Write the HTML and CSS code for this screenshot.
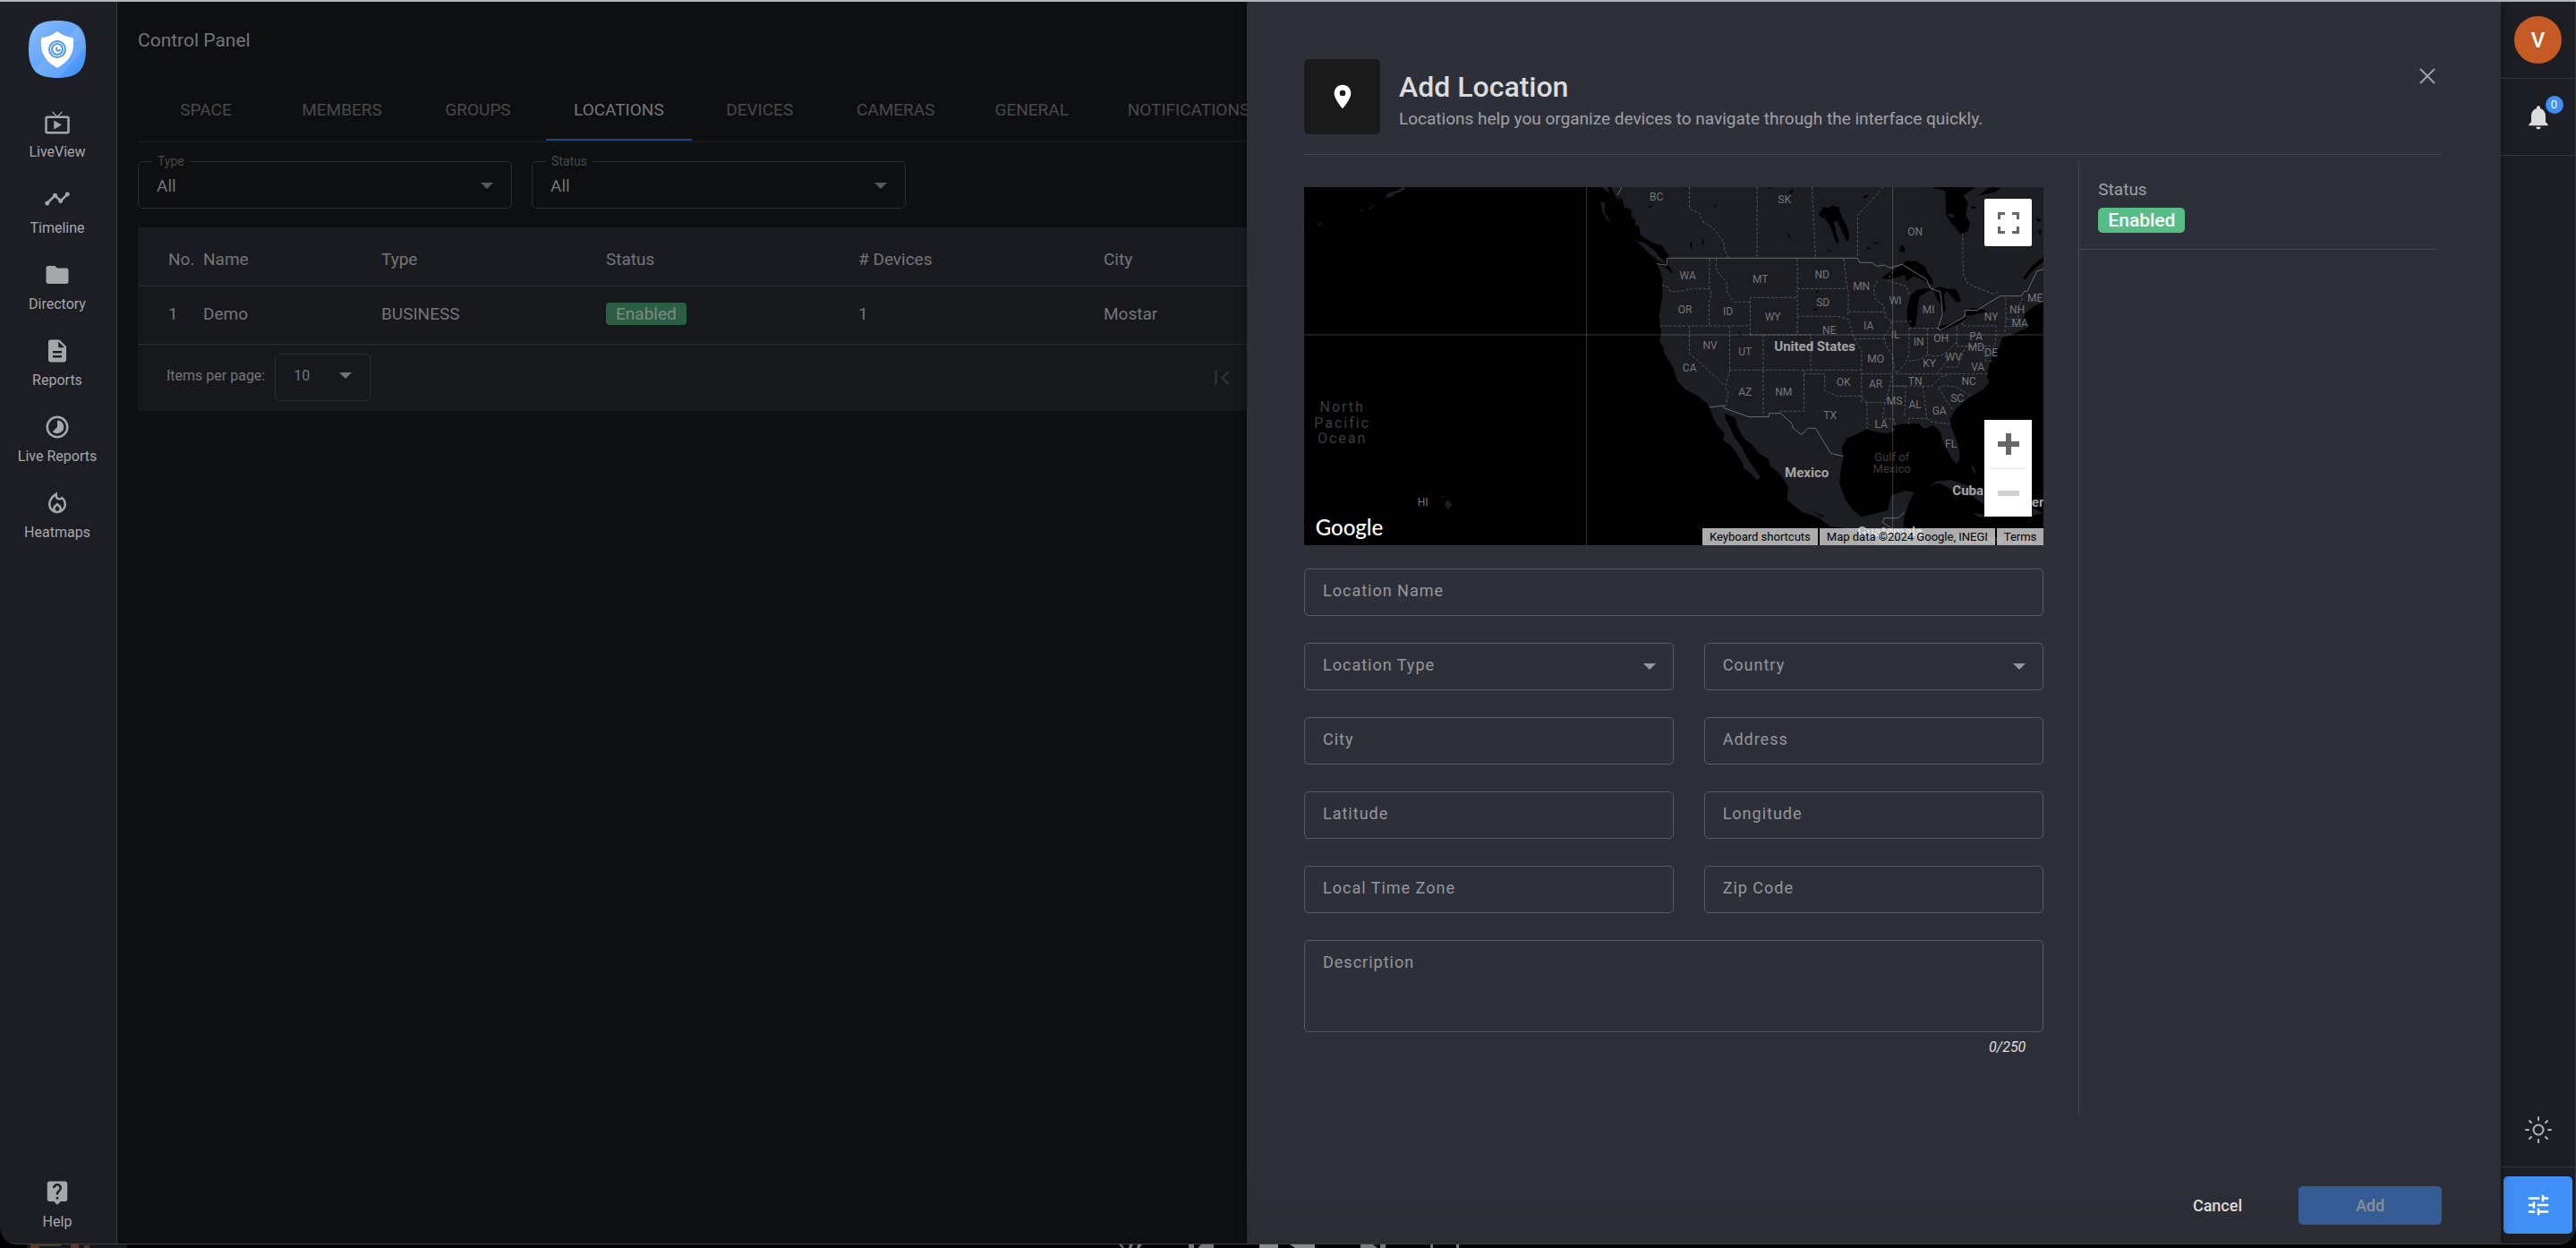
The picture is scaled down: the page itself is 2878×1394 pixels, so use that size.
FILE: index.html
```html
<!DOCTYPE html>
<html lang="en">
<head>
    <meta charset="utf-8">
    <title>Control Panel</title>
    <link rel="stylesheet" href="styles.css">
</head>
<body>
<div class="app">
    <nav class="sidebar">
        <a href="#" class="logo" aria-label="Home">
            <svg width="64" height="64" viewBox="0 0 64 64">
                <defs>
                    <linearGradient id="lg" x1="0" y1="0" x2="1" y2="1">
                        <stop offset="0" stop-color="#8abcfb"/>
                        <stop offset="1" stop-color="#3f8ff7"/>
                    </linearGradient>
                </defs>
                <path fill="url(#lg)" d="M32 0c23 0 32 9 32 32s-9 32-32 32S0 55 0 32 9 0 32 0z"/>
                <path fill="#fff" fill-opacity=".1" d="M6 56L56 5c6 5 8 13 8 24L34 64C20 64 11 62 6 56z"/>
                <path fill="#fff" d="M32 12c5 4 11 6 16 7 3 0 2 3 2 8 0 11-7 20-18 26-11-6-18-15-18-26 0-5-1-8 2-8 5-1 11-3 16-7z"/>
                <g fill="none" stroke="#4a94f6" stroke-width="2">
                    <circle cx="32" cy="32" r="9"/>
                    <circle cx="32" cy="32" r="6"/>
                </g>
                <path fill="none" stroke="#4a94f6" stroke-width="2" d="M32 30a2 2 0 1 0 3 2"/>
            </svg>
        </a>
        <a href="#" class="nav-item">
            <svg viewBox="0 0 24 24"><path d="M21 6h-7.59l3.29-3.29L16 2l-4 4-4-4-.7.71L10.59 6H3c-1.1 0-2 .89-2 2v12c0 1.1.9 2 2 2h18c1.1 0 2-.9 2-2V8c0-1.11-.9-2-2-2zm0 14H3V8h18v12zM9 10v8l7-4z"/></svg>
            <span>LiveView</span>
        </a>
        <a href="#" class="nav-item">
            <svg viewBox="0 0 24 24"><path d="M23 8c0 1.1-.9 2-2 2-.18 0-.35-.02-.51-.07l-3.56 3.55c.05.16.07.34.07.52 0 1.1-.9 2-2 2s-2-.9-2-2c0-.18.02-.36.07-.52l-2.55-2.55c-.16.05-.34.07-.52.07s-.36-.02-.52-.07l-4.55 4.56c.05.16.07.33.07.51 0 1.1-.9 2-2 2s-2-.9-2-2 .9-2 2-2c.18 0 .35.02.51.07l4.56-4.55C8.02 9.36 8 9.18 8 9c0-1.1.9-2 2-2s2 .9 2 2c0 .18-.02.36-.07.52l2.55 2.55c.16-.05.34-.07.52-.07s.36.02.52.07l3.55-3.56C19.02 8.35 19 8.18 19 8c0-1.1.9-2 2-2s2 .9 2 2z"/></svg>
            <span>Timeline</span>
        </a>
        <a href="#" class="nav-item">
            <svg viewBox="0 0 24 24"><path d="M10 4H4c-1.1 0-2 .9-2 2v12c0 1.1.9 2 2 2h16c1.1 0 2-.9 2-2V8c0-1.1-.9-2-2-2h-8l-2-2z"/></svg>
            <span>Directory</span>
        </a>
        <a href="#" class="nav-item">
            <svg viewBox="0 0 24 24"><path d="M14 2H6c-1.1 0-2 .9-2 2v16c0 1.1.9 2 2 2h12c1.1 0 2-.9 2-2V8l-6-6zm2 16H8v-2h8v2zm0-4H8v-2h8v2zm-3-5V3.5L18.5 9H13z"/></svg>
            <span>Reports</span>
        </a>
        <a href="#" class="nav-item">
            <svg viewBox="0 0 24 24"><path d="M16.24 7.76A5.97 5.97 0 0 0 12 6v6l-4.24 4.24a6 6 0 0 0 8.48-8.48zM12 2a10 10 0 1 0 0 20 10 10 0 0 0 0-20zm0 18a8 8 0 1 1 0-16 8 8 0 0 1 0 16z"/></svg>
            <span>Live Reports</span>
        </a>
        <a href="#" class="nav-item">
            <svg viewBox="0 0 24 24"><path d="M16 6l-.44.55c-.42.52-.98.75-1.54.75C13 7.3 12 6.52 12 5.3V2S4 6 4 13c0 4.42 3.58 8 8 8s8-3.58 8-8c0-2.96-1.61-5.62-4-7zm-4 13c-1.1 0-2-.87-2-1.94 0-.51.2-.99.58-1.36L12 14.3l1.43 1.4c.37.37.57.85.57 1.36C14 18.13 13.1 19 12 19zm3.96-1.5c.04-.36.22-1.89-1.13-3.22L12 11.5l-2.83 2.78C7.81 15.62 8 17.16 8.04 17.5 6.79 16.4 6 14.79 6 13c0-3.16 2.13-5.65 4.03-7.25.23 1.99 1.93 3.55 3.99 3.55.78 0 1.54-.23 2.18-.66C17.34 9.78 18 11.35 18 13c0 1.79-.79 3.4-2.04 4.5z"/></svg>
            <span>Heatmaps</span>
        </a>
        <a href="#" class="nav-item nav-help">
            <svg viewBox="0 0 24 24"><path d="M19 2H5c-1.11 0-2 .9-2 2v14c0 1.1.89 2 2 2h4l3 3 3-3h4c1.1 0 2-.9 2-2V4c0-1.1-.9-2-2-2zm-6 16h-2v-2h2v2zm2.07-7.75l-.9.92C13.45 11.9 13 12.5 13 14h-2v-.5c0-1.1.45-2.1 1.17-2.83l1.24-1.26c.37-.36.59-.86.59-1.41 0-1.1-.9-2-2-2s-2 .9-2 2H8c0-2.21 1.79-4 4-4s4 1.79 4 4c0 .88-.36 1.68-.93 2.25z"/></svg>
            <span>Help</span>
        </a>
    </nav>

    <main class="main">
        <h1>Control Panel</h1>
        <div class="tabs" role="tablist">
            <button role="tab">SPACE</button>
            <button role="tab">MEMBERS</button>
            <button role="tab">GROUPS</button>
            <button role="tab" class="active" aria-selected="true">LOCATIONS</button>
            <button role="tab">DEVICES</button>
            <button role="tab">CAMERAS</button>
            <button role="tab">GENERAL</button>
            <button role="tab">NOTIFICATIONS</button>
        </div>
        <div class="filters">
            <fieldset class="filter">
                <legend><label for="fType">Type</label></legend>
                <div class="select">
                    <select id="fType"><option>All</option></select>
                    <svg class="arrow" viewBox="0 0 14 7"><path d="M0 0h14L7 7z"/></svg>
                </div>
            </fieldset>
            <fieldset class="filter">
                <legend><label for="fStatus">Status</label></legend>
                <div class="select">
                    <select id="fStatus"><option>All</option></select>
                    <svg class="arrow" viewBox="0 0 14 7"><path d="M0 0h14L7 7z"/></svg>
                </div>
            </fieldset>
        </div>
        <table class="locations">
            <colgroup>
                <col class="c-no"><col class="c-name"><col class="c-type"><col class="c-status"><col class="c-devices"><col class="c-city">
            </colgroup>
            <thead>
                <tr><th>No.</th><th>Name</th><th>Type</th><th>Status</th><th># Devices</th><th>City</th></tr>
            </thead>
            <tbody>
                <tr><td>1</td><td>Demo</td><td>BUSINESS</td><td><span class="tag">Enabled</span></td><td>1</td><td>Mostar</td></tr>
            </tbody>
        </table>
        <div class="paginator">
            <label for="perPage">Items per page:</label>
            <div class="select page-size">
                <select id="perPage"><option>10</option></select>
                <svg class="arrow" viewBox="0 0 14 7"><path d="M0 0h14L7 7z"/></svg>
            </div>
            <button class="first-page" aria-label="First page" disabled>
                <svg width="32" height="32" viewBox="0 0 24 24"><path d="M18.41 16.59L13.82 12l4.59-4.59L17 6l-6 6 6 6zM6 6h2v12H6z"/></svg>
            </button>
        </div>
    </main>

    <section class="drawer">
        <header class="drawer-head">
            <div class="head-icon">
                <svg width="32" height="32" viewBox="0 0 24 24"><path d="M12 2C8.13 2 5 5.13 5 9c0 5.25 7 13 7 13s7-7.75 7-13c0-3.87-3.13-7-7-7zm0 9.5a2.5 2.5 0 1 1 0-5 2.5 2.5 0 0 1 0 5z"/></svg>
            </div>
            <div class="head-text">
                <h2>Add Location</h2>
                <p>Locations help you organize devices to navigate through the interface quickly.</p>
            </div>
            <button class="close" aria-label="Close">
                <svg width="18" height="18" viewBox="0 0 18 18"><path d="M1 1l16 16M17 1L1 17"/></svg>
            </button>
        </header>

        <div class="drawer-body">
            <form class="form" id="locForm">
                <div class="map">
                    <svg class="map-canvas" viewBox="0 0 827 400" preserveAspectRatio="xMidYMid slice">
                        <rect width="827" height="400" fill="#000"/>
                        <!-- islands -->
                        <path class="land" d="M90 12l5-6 9-2 6-4h4l-2 3-5 3-5 1-4 4zM72 25l5-5 2-1-4 5zM61 30l5-6 1 1zM14 43l6-4-1 3zM0 46l4-1-4 2zM141 339l4 2-4-1zM153 345l4 1-2 1zM158 351l4-1 4 5-5 5-3-4z"/>
                        <g transform="translate(323 -19) scale(.338 .3333)">
                            <!-- mainland -->
                            <path class="land" d="M84 50L78 82 98 100 104 125 118 128 130 135 126 158 138 165 142 190 152 184 156 215 172 228 192 240 212 248 228 252 252 288 246 300 250 322 262 345 240 325 212 316 222 335 230 370 230 420 218 490 222 520 226 550 220 575 232 590 236 615 252 640 264 660 275 690 278 705 305 735 345 755 375 780 386 797 398 832 415 860 435 882 430 905 455 922 478 955 495 985 500 1000 520 1015 544 1040 553 1028 530 995 510 965 490 925 468 895 455 865 438 835 436 815 452 822 470 830 476 855 490 885 505 905 525 918 550 950 580 968 585 990 620 1020 645 1060 642 1105 690 1145 745 1165 785 1195 830 1200 890 1220 930 1250 960 1275 1115 1275 1105 1235 1085 1210 1025 1195 1030 1160 1045 1115 1062 1080 1035 1074 985 1090 975 1140 930 1152 888 1162 860 1140 835 1105 815 1050 820 1000 828 965 822 930 840 900 870 885 905 868 945 880 975 882 1000 872 990 858 1030 850 1078 850 1095 868 1125 855 1150 880 1155 905 1170 935 1185 965 1202 985 1212 970 1212 940 1200 900 1185 860 1180 835 1200 800 1240 765 1290 735 1310 710 1302 690 1310 650 1322 620 1345 590 1352 562 1385 552 1410 540 1436 528 1422 500 1428 480 1460 455 1500 440 1500 50z"/>
                            <path class="land" d="M25 105l15 5-2 30 18 30 14 16-24-20-16-30zM30 57l20 0 5 20-12-8zM60 57l28 0-8 26 14 28-18-22zM130 228l24 4 40 30 22 18 30 24-4 14-28-16-30-24-22-24z"/>
                            <path class="land" d="M1110 1062l30-20 45-4 60 22 80 45 60 12 10 14-90 0-50-38-60-18-50-26-25 8zM1250 985l12 18 6 16-14-14zM1255 1150l50 4 20 12-50-4zM1340 1100l90 20 60 30-50 10-80-20z"/>
                            <!-- bays and lakes -->
                            <g fill="#000">
                                <path d="M1098 50L1135 62 1165 70 1167 150 1182 175 1196 190 1214 215 1240 205 1246 178 1232 150 1240 112 1224 85 1262 60 1262 50z"/>
                                <path d="M746 148l18-26 14 6 12-10 22 6 12 36 16 28 8 34-8 20-14-32-10-22-8-18-12 4 8 34 8 26-2 16-10-14-10-34-8-20-14-18 2-14-8 14z"/>
                                <path d="M200 254l25 10 18 18 6 14-2 20 16 26-4 4-18-22-6-20-18-16-16-24zM125 225l36 8 12 10-26-4z"/>
                                <path d="M955 362l30-24 40-22 10-12 35 2 30 20 6 20 14 16 6 22-20-6-20-12-26-10-24 16-6-20-34 10-18 4z"/>
                                <path d="M1038 470l6-30 6-20 20-18 30-6 18 4-16 10-22 12-6 34-4 40-4 26-12 6-14-22z"/>
                                <path d="M1126 400l20-10 30 8 24 0 18 40-14 6-20-22-14-16-10 10 6 50-8 22-8-34-14-24z"/>
                                <path d="M1140 524l40-8 50-24 8 4-40 24-45 18zM1225 478l28-16 42 6 2 8-56 12z"/>
                                <path d="M1422 362l30-42 40-32v16l-40 34-22 28zM1012 270l8-20 12 12-4 16zM922 240l24 6-14 2zM775 268l12 2-6 4zM478 537l8 8 8 14-8-4zM400 122l10-10-6 14zM365 230l4 20-10-6zM320 240l8 10-4 20zM645 205l10 24-8-8zM890 92l20-12-6 12zM580 60l10-2-4 6zM648 74l14-12-4 16zM1274 85l40-28 36 2-18 14-36 8zM1250 120l20 6-16 4zM1466 160l16 8-10 6zM1470 205l12-4-2 16zM180 124l20-6-12 8zM730 1146l36 14-10 2zM736 408l12-6-6 8zM725 466l20-2-12 6zM862 714l6 6-2 4zM908 256l12 8-12 0z"/>
                            </g>
                            <path class="land" d="M1168 150l16-6 14 12-12 4zM1160 420l14 2 4 16z"/>
                            <!-- state lines -->
                            <path class="state" d="M319 57v72l32 15 14 30 30 18 38 50 2 25 14 26M543 57v237M724 57l12 237M960 57l-85 95v140M1222 212l2 140 15 28 45 20 40 14 18-6M407 297l2 40 34 38v35l24 32h52M385 297v98M228 386l20 6 10 16 40-4 40-8 48 2 6 20-8 24v78M222 522h298M520 552V427h155M676 297v255M676 397h166M829 297l10 90 6 20-2 80M845 475h118M676 490h130l38 10 20 65h98M520 552h200v118M319 522v92l116 106M452 522v148M563 552v272M452 670h434M452 670l-14 60 10 14-10 48M698 670v138h-82M698 683h68v56l40 18h80l20 22 0 90M864 565l12 20 12 20v172M888 683h96l4 12-20 84h-66M965 780l-8 54h38l4 22M940 372l-12 20 4 40 28 22 8 40 18 12-2 25-22 24 6 34 22 30 6 42 10 20M985 507h72M990 340l-15 32 60 16 10 30M1045 530v86l-10 30-30 34M1045 530h100M1106 530v90l-30 16-30 4M1106 620l30 4 22-6 24-20 22-24M1203 530v60h122M1203 522v8M1222 510v12h110l0 40-4 30M1000 683h310M1000 724h120l30-30 30-10M990 724h44M1034 724l-4 105M1090 724l14 108h-60v20M1104 832l16 12 60 6M1142 732l50 74M1142 728l22-6 40 6 46 30M1140 680l30-40-6-20M1170 660h34l14-30 14-40 28 6M1365 430v70l-4 50M1420 430l-14 30 0 40M1366 500h50M1366 524h46M1290 590l10 50h24"/>
                            <!-- country borders -->
                            <path class="border" d="M95 57L82 84M212 314l32 5 2-24h628l8 15 40 0 18 12 22-4 20 10 40-12 80 50 14 30 32 12 8 74-16 50 10 4 78-44 2-22 40 0 40-26 36-22h70l10-16 10 0 32-68 24-6 10 10 0 50M384 795l50-6-2 8 84 30h66v-12h38l36 32 6 18 28 22 20-22h26l50 84 42 10M958 1180l4-14h46l22-20M958 1180l30 22"/>
                        </g>
                        <path class="grat" d="M316 0v400M658 0v400M0 165h827"/>
                        <g class="st">
                            <text x="394" y="15">BC</text><text x="537" y="18">SK</text><text x="683" y="54">ON</text>
                            <text x="429" y="103">WA</text><text x="510" y="107">MT</text><text x="579" y="102">ND</text>
                            <text x="623" y="115">MN</text><text x="580" y="133">SD</text><text x="426" y="141">OR</text>
                            <text x="474" y="143">ID</text><text x="524" y="149">WY</text><text x="661" y="131">WI</text>
                            <text x="698" y="141">MI</text><text x="768" y="149">NY</text><text x="797" y="141">NH</text>
                            <text x="817" y="128">ME</text><text x="800" y="156">MA</text><text x="587" y="164">NE</text>
                            <text x="631" y="159">IA</text><text x="661" y="169">IL</text><text x="687" y="177">IN</text>
                            <text x="712" y="173">OH</text><text x="751" y="171">PA</text><text x="751" y="183">MD</text>
                            <text x="768" y="189">DE</text><text x="454" y="181">NV</text><text x="493" y="188">UT</text>
                            <text x="431" y="206">CA</text><text x="639" y="196">MO</text><text x="699" y="201">KY</text>
                            <text x="726" y="194">WV</text><text x="753" y="205">VA</text><text x="493" y="233">AZ</text>
                            <text x="536" y="233">NM</text><text x="603" y="222">OK</text><text x="639" y="224">AR</text>
                            <text x="683" y="221">TN</text><text x="743" y="221">NC</text><text x="730" y="240">SC</text>
                            <text x="660" y="243">MS</text><text x="683" y="247">AL</text><text x="710" y="254">GA</text>
                            <text x="588" y="259">TX</text><text x="645" y="269">LA</text><text x="723" y="291">FL</text>
                            <text x="133" y="356">HI</text>
                        </g>
                        <g class="sea">
                            <text x="657" y="306">Gulf of</text><text x="657" y="319">Mexico</text>
                            <text x="772" y="398">Caribbean Sea</text>
                        </g>
                        <g class="ocean">
                            <text x="43" y="251">North</text><text x="43" y="269">Pacific</text><text x="43" y="286">Ocean</text>
                        </g>
                        <g class="country">
                            <text x="571" y="183">United States</text><text x="562" y="324">Mexico</text>
                            <text x="742" y="344">Cuba</text><text x="655" y="390">Guatemala</text><text x="820" y="357">er</text>
                        </g>
                        <text class="google" x="13" y="389">Google</text>
                    </svg>
                    <button type="button" class="map-full" aria-label="Toggle fullscreen">
                        <svg width="24" height="24" viewBox="0 0 24 24"><path d="M0 0h8v3H3v5H0zM16 0h8v8h-3V3h-5zM0 16h3v5h5v3H0zM21 16h3v8h-8v-3h5z"/></svg>
                    </button>
                    <div class="map-zoom">
                        <button type="button" aria-label="Zoom in"><svg width="24" height="24" viewBox="0 0 24 24"><path d="M9 0h6v9h9v6h-9v9H9v-9H0V9h9z"/></svg></button>
                        <button type="button" aria-label="Zoom out" disabled><svg width="24" height="24" viewBox="0 0 24 24"><path d="M0 9h24v6H0z"/></svg></button>
                    </div>
                    <div class="map-attr">
                        <button type="button">Keyboard shortcuts</button>
                        <span>Map data ©2024 Google, INEGI</span>
                        <a href="#">Terms</a>
                    </div>
                </div>

                <div class="fields">
                    <div class="field wide">
                        <input id="name" type="text">
                        <label for="name">Location Name</label>
                    </div>
                    <div class="field">
                        <select id="type"><option></option></select>
                        <label for="type">Location Type</label>
                        <svg class="arrow" viewBox="0 0 14 7"><path d="M0 0h14L7 7z"/></svg>
                    </div>
                    <div class="field">
                        <select id="country"><option></option></select>
                        <label for="country">Country</label>
                        <svg class="arrow" viewBox="0 0 14 7"><path d="M0 0h14L7 7z"/></svg>
                    </div>
                    <div class="field">
                        <input id="city" type="text">
                        <label for="city">City</label>
                    </div>
                    <div class="field">
                        <input id="address" type="text">
                        <label for="address">Address</label>
                    </div>
                    <div class="field">
                        <input id="lat" type="text">
                        <label for="lat">Latitude</label>
                    </div>
                    <div class="field">
                        <input id="lng" type="text">
                        <label for="lng">Longitude</label>
                    </div>
                    <div class="field">
                        <input id="tz" type="text">
                        <label for="tz">Local Time Zone</label>
                    </div>
                    <div class="field">
                        <input id="zip" type="text">
                        <label for="zip">Zip Code</label>
                    </div>
                    <div class="field wide">
                        <textarea id="desc" maxlength="250"></textarea>
                        <label for="desc">Description</label>
                    </div>
                </div>
                <div class="counter">0/250</div>
            </form>
            <aside class="info">
                <div class="info-row">
                    <div class="info-label">Status</div>
                    <span class="badge-on">Enabled</span>
                </div>
            </aside>
        </div>

        <footer class="drawer-foot">
            <button class="btn-cancel">Cancel</button>
            <button class="btn-add" form="locForm" disabled>Add</button>
        </footer>
    </section>

    <aside class="rail">
        <div class="rail-cell"><button class="avatar">V</button></div>
        <div class="rail-cell">
            <button class="bell" aria-label="Notifications">
                <svg width="32" height="32" viewBox="0 0 24 24"><path d="M12 22c1.1 0 2-.9 2-2h-4c0 1.1.9 2 2 2zm6-6v-5c0-3.07-1.63-5.64-4.5-6.32V4a1.5 1.5 0 0 0-3 0v.68C7.64 5.36 6 7.92 6 11v5l-2 2v1h16v-1l-2-2z"/></svg>
                <span class="count">0</span>
            </button>
        </div>
        <button class="theme" aria-label="Toggle theme">
            <svg width="30" height="30" viewBox="0 0 30 30"><circle cx="15" cy="15" r="5.5"/><path d="M15 1v3M15 26v3M1 15h3M26 15h3M5 5l2 2M23 23l2 2M5 25l2-2M23 7l2-2"/></svg>
        </button>
        <div class="rail-foot">
            <button class="tune" aria-label="Control panel">
                <svg width="30" height="30" viewBox="0 0 24 24"><path d="M3 17v2h6v-2H3zM3 5v2h10V5H3zm10 16v-2h8v-2h-8v-2h-2v6h2zM7 9v2H3v2h4v2h2V9H7zm14 4v-2H11v2h10zm-6-4h2V7h4V5h-4V3h-2v6z"/></svg>
            </button>
        </div>
    </aside>
</div>
<!-- window peeking out from behind -->
<svg class="behind" viewBox="0 0 2878 4" preserveAspectRatio="none">
    <path fill="#16181d" d="M30 0h112v4H30z"/>
    <path fill="#4a3f1c" d="M34 0h34v2H34z"/>
    <path fill="#5e352f" d="M34 2h10v2H34zM79 0h9v4h-9zM94 1h6v3h-6z"/>
    <path fill="#777" d="M1250 0h3l3 4h-2zM1262 0h4l-2 4h-3zM1271 0h5l-3 4h-3zM1328 0h6v4h-6zM1342 0h14v4h-18zM1520 0h14l5 4h-19zM1542 0h6v4h-6zM1598 0h3v4h-3zM1627 0h3v4h-3z"/>
    <path fill="#8a8a8a" d="M1407 0h21v4h-21zM1441 0h28v4h-22z"/>
</svg>
</body>
</html>
```
FILE: styles.css
```css
* {
    box-sizing: border-box;
}

html,
body {
    margin: 0;
    padding: 0;
    height: 100%;
    background: #000;
    color: #dcdcdd;
    font-family: Roboto, "Liberation Sans", sans-serif;
    font-size: 19px;
}

body {
    display: flex;
    flex-direction: column;
}

button,
input,
select,
textarea {
    font: inherit;
    color: inherit;
    background: none;
    border: 0;
    margin: 0;
    padding: 0;
}

a {
    color: inherit;
    text-decoration: none;
}

svg {
    display: block;
    fill: currentColor;
}

.app {
    flex: 1;
    min-height: 0;
    display: grid;
    grid-template-columns: 131px minmax(0, 1262fr) minmax(0, 1400fr) 85px;
    background: #0e0f11;
    border-top: 2px solid #b3b6ba;
    border-bottom: 1px solid #3c3e42;
    border-radius: 0 0 20px 20px;
    overflow: hidden;
}

.behind {
    width: 100%;
    height: 4px;
    flex: none;
}

/* left menu */
.sidebar {
    display: flex;
    flex-direction: column;
    align-items: center;
    gap: 27px;
    padding: 21px 2px 14px 0;
    background: #1d1e24;
    border-right: 1px solid #37383d;
}

.logo {
    margin-bottom: 8px;
}

.nav-item {
    display: flex;
    flex-direction: column;
    align-items: center;
    gap: 8px;
    color: #a6a7a9;
    font-size: 16px;
    line-height: 20px;
}

.nav-item svg {
    width: 30px;
    height: 30px;
}

.nav-help {
    margin-top: auto;
}

/* page behind the drawer */
.main {
    padding: 27px 0 0 23px;
    overflow: hidden;
    color: #747577;
}

.main h1 {
    margin: 0;
    font-size: 21px;
    font-weight: 400;
    line-height: 32px;
}

.tabs {
    display: flex;
    margin-top: 29px;
    border-bottom: 2px solid #18191c;
}

.tabs button {
    flex: none;
    min-width: 152px;
    height: 67px;
    padding: 0 31px;
    border-bottom: 2px solid transparent;
    color: #48494b;
}

.tabs .active {
    border-bottom-color: #20487b;
    color: #747577;
}

.filters {
    display: flex;
    gap: 22px;
    margin-top: 12px;
}

.filter {
    width: 418px;
    height: 62px;
    margin: 0;
    padding: 0;
    border: 1px solid #2a2b2d;
    border-radius: 5px;
}

.filter legend {
    margin-left: 15px;
    padding: 0 6px;
    color: #48494b;
    font-size: 14px;
    line-height: 18px;
}

.select {
    display: grid;
    align-items: center;
    color: #747577;
}

.select > * {
    grid-area: 1 / 1;
}

.select select {
    width: 100%;
    height: 36px;
    padding-left: 20px;
    appearance: none;
}

.arrow {
    width: 14px;
    height: 7px;
    margin-right: 20px;
    justify-self: end;
    pointer-events: none;
}

.filter .arrow {
    color: #57585a;
}

.locations {
    width: 1400px;
    margin-top: 21px;
    table-layout: fixed;
    border-collapse: collapse;
    background: #17181c;
    text-align: left;
}

.locations th,
.locations td {
    height: 65px;
    padding: 0;
    border-bottom: 1px solid #2b2c30;
    font-weight: 400;
}

.locations th {
    padding-top: 6px;
    background: #1a1b20;
}

.locations td {
    padding-bottom: 2px;
}

.locations th:first-child,
.locations td:first-child {
    padding-left: 34px;
}

.c-no { width: 73px; }
.c-name { width: 199px; }
.c-type { width: 251px; }
.c-status { width: 282px; }
.c-devices { width: 274px; }

.tag {
    display: inline-block;
    padding: 0 11px;
    border-radius: 4px;
    background: #2b5f44;
    color: #7f8a84;
    line-height: 25px;
}

.paginator {
    display: flex;
    align-items: center;
    height: 74px;
    padding: 0 12px 0 32px;
    background: #17181c;
    font-size: 16px;
}

.paginator label {
    padding-bottom: 5px;
}

.page-size {
    align-items: start;
    width: 107px;
    height: 53px;
    margin-left: 11px;
    padding-top: 5px;
    border: 1px solid #2a2b2d;
    border-radius: 5px;
}

.page-size .arrow {
    margin-top: 15px;
}

.first-page {
    margin-left: auto;
    color: #2e2f32;
}

/* add location drawer */
.drawer {
    display: flex;
    flex-direction: column;
    background: #2d3038;
    z-index: 1;
    box-shadow: 0 0 12px rgba(0, 0, 0, .4);
}

.drawer-head {
    display: flex;
    margin: 64px 65px 0 64px;
    padding-bottom: 22px;
    border-bottom: 1px solid #45484f;
}

.head-icon {
    display: grid;
    place-items: center;
    width: 85px;
    height: 84px;
    border-radius: 5px;
    background: #1a1a1a;
    color: #fff;
}

.head-text {
    margin-left: 21px;
    padding-top: 11px;
}

.head-text h2 {
    margin: 0;
    font-size: 32px;
    font-weight: 500;
    line-height: 40px;
}

.head-text p {
    margin: 0;
    color: #a0a1a5;
    line-height: 32px;
}

.close {
    align-self: flex-start;
    margin: 10px 7px 0 auto;
}

.close svg {
    fill: none;
    stroke: #a0a1a5;
    stroke-width: 2;
}

.drawer-body {
    flex: 1;
    display: flex;
    margin: 9px 70px 60px 64px;
}

.form {
    flex: 827;
    padding-top: 27px;
    margin-right: 39px;
}

.map {
    position: relative;
    height: 400px;
    overflow: hidden;
}

.map-canvas {
    width: 100%;
    height: 100%;
}

.land { fill: #1d1e23; }

.state,
.border {
    fill: none;
    stroke: #55565a;
    vector-effect: non-scaling-stroke;
}

.state { stroke-dasharray: 3 2; }
.border { stroke: #6a6b6d; }

.grat {
    fill: none;
    stroke: #fff;
    stroke-opacity: .22;
}

.map-canvas text { text-anchor: middle; }
.st { fill: #75767a; font-size: 12px; }
.sea { fill: #3d3d3f; font-size: 13px; }
.ocean { fill: #3d3d3d; font-size: 16px; letter-spacing: 2px; }
.country { fill: #a5a5a5; font-size: 15px; font-weight: 700; }

.map-canvas .google {
    fill: #fff;
    font-family: Lato, sans-serif;
    font-size: 24px;
    font-weight: 500;
    text-anchor: start;
}

.map-full,
.map-zoom {
    position: absolute;
    right: 13px;
    width: 53px;
    background: #fff;
    color: #666;
}

.map-full {
    top: 13px;
    height: 53px;
    border-radius: 2px;
}

.map-full svg,
.map-zoom svg {
    margin: auto;
}

.map-zoom {
    bottom: 32px;
}

.map-zoom button {
    display: block;
    width: 41px;
    height: 54px;
    margin: 0 6px;
}

.map-zoom button + button {
    border-top: 1px solid #e6e6e6;
    color: #d1d1d1;
}

.map-attr {
    position: absolute;
    right: 0;
    bottom: 0;
    display: flex;
    gap: 2px;
    color: #000;
    font-size: 13px;
    line-height: 19px;
}

.map-attr > * {
    padding: 0 8px;
    background: rgba(245, 245, 245, .7);
}

.fields {
    display: grid;
    grid-template-columns: 413fr 380fr;
    gap: 30px 34px;
    margin-top: 26px;
}

.field {
    display: grid;
    color: #95979c;
    font-size: 18px;
}

.field.wide {
    grid-column: span 2;
}

.field > * {
    grid-area: 1 / 1;
}

.field input,
.field select,
.field textarea {
    width: 100%;
    height: 53px;
    padding: 0 21px;
    border: 1px solid #585b63;
    border-radius: 5px;
    appearance: none;
}

.field textarea {
    display: block;
    height: 103px;
    padding-top: 14px;
    resize: none;
}

.field label {
    align-self: start;
    margin-left: 21px;
    line-height: 50px;
    letter-spacing: 1px;
    pointer-events: none;
}

.field .arrow {
    align-self: center;
}

.counter {
    margin: 7px 20px 0 0;
    color: #dcdcdd;
    font-size: 16px;
    font-style: italic;
    line-height: 20px;
    text-align: right;
}

.info {
    flex: 400;
    border-left: 1px solid #45484f;
}

.info-row {
    height: 97px;
    padding: 18px 0 0 21px;
    border-bottom: 1px solid #45484f;
}

.info-label {
    color: #a0a1a5;
    line-height: 24px;
}

.badge-on {
    display: inline-block;
    margin-top: 8px;
    padding: 0 11px;
    border-radius: 5px;
    background: #56bd87;
    color: #fff;
    font-size: 21px;
    font-weight: 500;
    line-height: 28px;
}

.drawer-foot {
    display: flex;
    justify-content: flex-end;
    align-items: center;
    gap: 63px;
    height: 86px;
    padding-right: 65px;
    background: linear-gradient(#2d3038, #2a2c34);
    font-size: 18px;
    font-weight: 500;
}

.btn-add {
    width: 160px;
    height: 43px;
    border-radius: 5px;
    background: #355c94;
    color: #8b8f95;
}

/* right rail */
.rail {
    display: flex;
    flex-direction: column;
    background: #1d1e23;
    border: solid #36373b;
    border-width: 0 1px;
}

.rail-cell {
    display: grid;
    place-items: center;
    height: 86px;
    border-bottom: 1px solid #36373b;
}

.avatar {
    width: 53px;
    height: 53px;
    border-radius: 50%;
    background: #c55a24;
    color: #fff;
    font-size: 24px;
    font-weight: 500;
}

.bell {
    position: relative;
    color: #dcdcdd;
}

.count {
    position: absolute;
    top: -8px;
    right: -12px;
    width: 20px;
    height: 20px;
    border-radius: 50%;
    background: #3f8ff7;
    color: #fff;
    font-size: 13px;
    line-height: 20px;
    text-align: center;
}

.theme {
    margin: auto auto 26px;
}

.theme svg {
    fill: none;
    stroke: #b5b6b8;
    stroke-width: 2;
    stroke-linecap: round;
}

.rail-foot {
    height: 86px;
    padding: 10px 3px;
    border-top: 1px solid #36373b;
}

.tune {
    display: grid;
    place-items: center;
    width: 77px;
    height: 64px;
    border-radius: 5px;
    background: #3f8ff7;
    color: #fff;
}
```
